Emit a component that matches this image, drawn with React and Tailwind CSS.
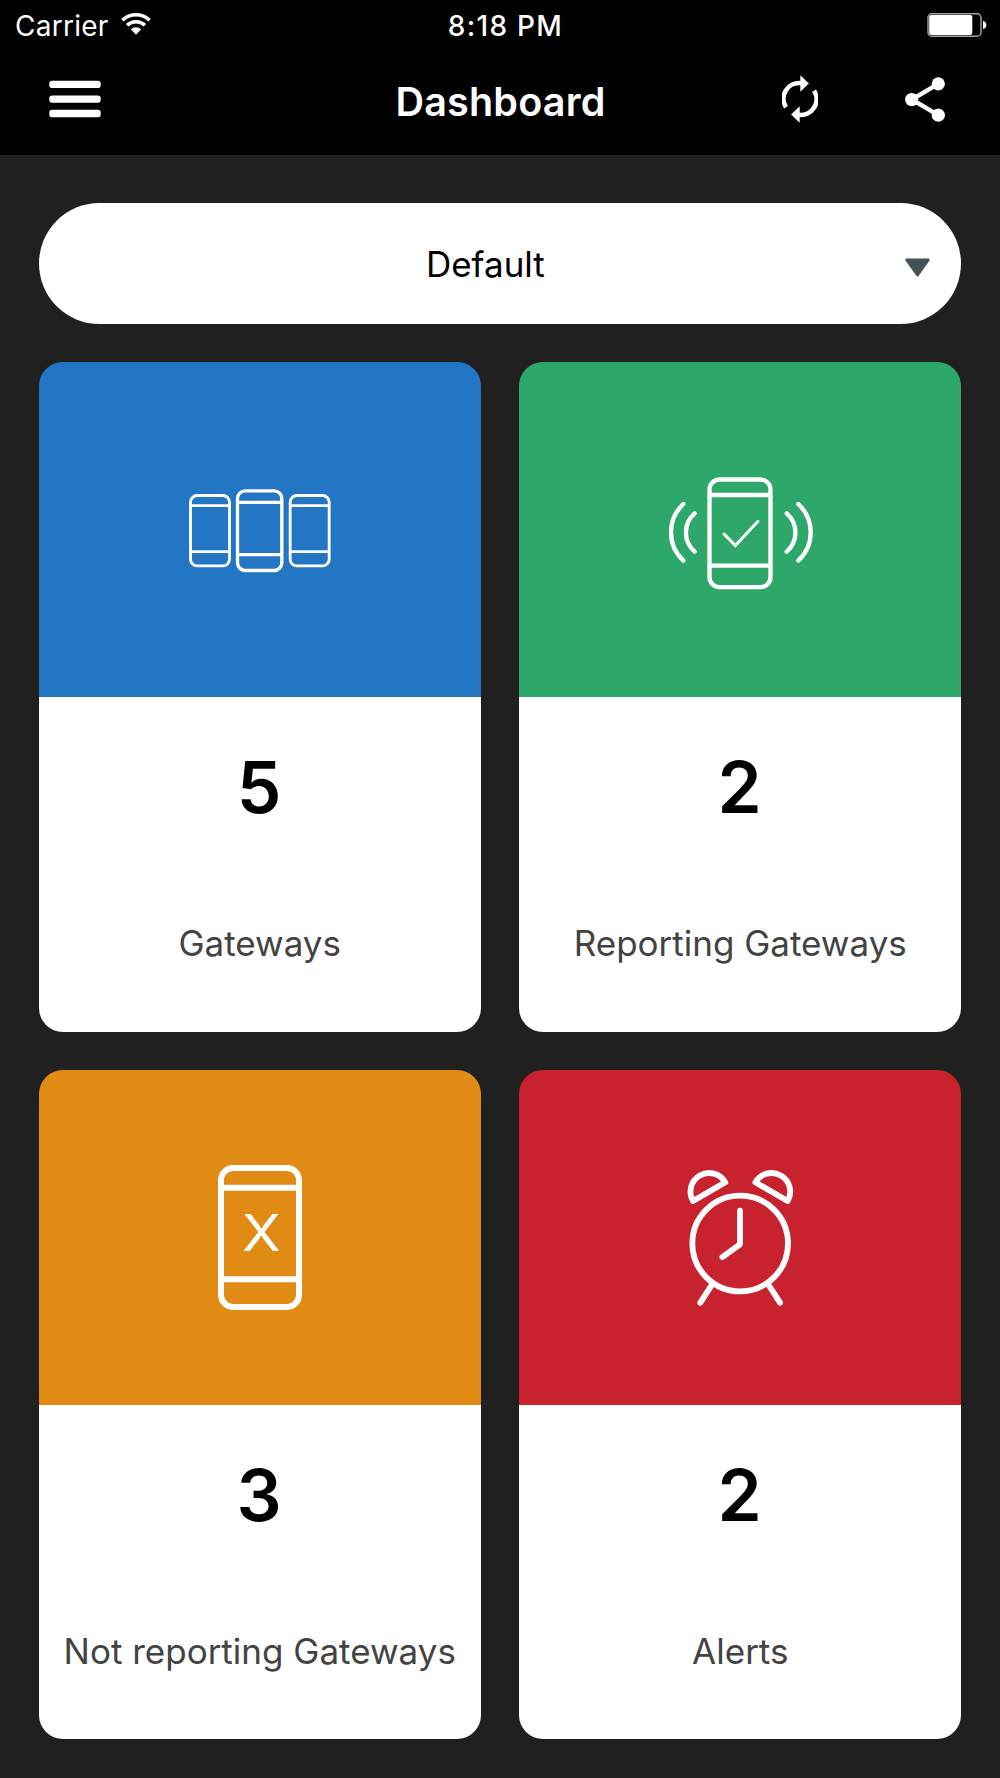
/**
 * Dashboard screen - gateway status overview
 *
 * Status bar, navigation bar, group selector and four summary tiles.
 */

import { useState } from 'react';

const stats = { gateways: 5, reporting: 2, notReporting: 3, alerts: 2 };

function WifiIcon() {
  return (
    <svg className="w-8 h-6" viewBox="0 0 32 24" fill="none" stroke="white" strokeWidth="3.5">
      <path d="M2.4 8.2a20 20 0 0 1 27.2 0" />
      <path d="M7.1 13.2a13 13 0 0 1 17.8 0" />
      <path d="M16 22.7l-5.1-5.4a7.4 7.4 0 0 1 10.2 0z" fill="white" stroke="none" />
    </svg>
  );
}

function BatteryIcon() {
  return (
    <svg className="w-[60px] h-6" viewBox="0 0 60 24">
      <rect x="1" y=".8" width="53" height="22.4" rx="3.8" fill="none" stroke="#a3a3a3" strokeWidth="1.4" />
      <rect x="2.2" y="2" width="43.1" height="20" rx="2" fill="white" />
      <path d="M56 8c2 .2 3.4 2 3.4 4s-1.4 3.8-3.4 4z" fill="white" />
    </svg>
  );
}

function MenuIcon() {
  return (
    <svg className="w-[52px] h-[38px]" viewBox="0 0 52 38" fill="white">
      <rect x=".3" y=".7" width="51.4" height="7.4" rx="2.8" />
      <rect x=".3" y="15.4" width="51.4" height="7.4" rx="2.8" />
      <rect x=".3" y="29.8" width="51.4" height="7.4" rx="2.8" />
    </svg>
  );
}

function RefreshIcon() {
  return (
    <svg className="w-9 h-12" viewBox="0 0 36 48" fill="white">
      <g fill="none" stroke="white" strokeWidth="4.6">
        <path d="M4 32.2a15.6 15.6 0 0 1 15-24" />
        <path d="M32 15.8a15.6 15.6 0 0 1-15 24" />
      </g>
      <path d="M18.3 .2l8.6 8.3-8.6 8.3z" />
      <path d="M17.7 47.8l-8.6-8.3 8.6-8.3z" />
    </svg>
  );
}

function ShareIcon() {
  return (
    <svg className="w-10 h-[45px]" viewBox="0 0 40 45" fill="white">
      <path d="M33.3 6.8L6.7 22.5l26.6 15.7" fill="none" stroke="white" strokeWidth="4.4" />
      <circle cx="33.3" cy="6.8" r="6.6" />
      <circle cx="6.7" cy="22.5" r="6.6" />
      <circle cx="33.3" cy="38.2" r="6.6" />
    </svg>
  );
}

function GatewaysIcon() {
  return (
    <svg className="w-[180px] h-[120px]" viewBox="0 0 540 360" fill="none" stroke="white" strokeWidth="8.5">
      <rect x="61.5" y="76.5" width="117" height="211" rx="20" />
      <path d="M62 107h116M62 245h116" />
      <rect x="202.5" y="62.5" width="133" height="239" rx="23" strokeWidth="10" />
      <path d="M203 97h132M203 254h132" strokeWidth="9.5" />
      <rect x="360.5" y="76.5" width="117" height="211" rx="20" />
      <path d="M361 107h116M361 245h116" />
    </svg>
  );
}

function ReportingIcon() {
  return (
    <svg className="w-[180px] h-[139.3px]" viewBox="0 0 540 418" fill="none" stroke="white" strokeWidth="13" strokeLinecap="round">
      <rect x="178.5" y="58.5" width="183" height="323" rx="30" />
      <path d="M180 105h180M180 317h180" />
      <path d="M222 222l34 35 68-73" strokeWidth="9" />
      <path d="M134 160a76 76 0 0 0 0 115" strokeWidth="13" />
      <path d="M100 132a116 116 0 0 0 0 170" strokeWidth="13" />
      <path d="M410 160a76 76 0 0 1 0 115" strokeWidth="13" />
      <path d="M445 132a116 116 0 0 1 0 170" strokeWidth="13" />
    </svg>
  );
}

function NotReportingIcon() {
  return (
    <svg className="w-[120px] h-[174.7px]" viewBox="0 0 360 524" fill="none" stroke="white" strokeWidth="18">
      <rect x="63" y="54" width="234" height="417" rx="36" />
      <path d="M64 113h232M64 388h232" />
      <text
        transform="translate(184 302) scale(1.12 1)"
        textAnchor="middle"
        className="font-['Inter',sans-serif] text-[152px]"
        fill="white"
        stroke="none"
      >
        X
      </text>
    </svg>
  );
}

function AlarmIcon() {
  return (
    <svg
      className="w-[140px] h-[174.7px]"
      viewBox="0 0 420 524"
      fill="none"
      stroke="white"
      strokeWidth="17.5"
      strokeLinecap="round"
      strokeLinejoin="round"
    >
      <circle cx="210.5" cy="280.5" r="143.5" />
      <path d="M210 182v101l-53 38" />
      <path d="M127 402l-36 56M294 402l36 56" />
      <path d="M69 153l97-56a56 56 0 0 0-97 56z" />
      <path d="M353 153l-97-56a56 56 0 0 1 97 56z" />
    </svg>
  );
}

function StatCard({ color, icon, value, label }) {
  return (
    <button className="flex flex-col rounded-[24px] overflow-hidden">
      <div className={`w-full h-[334.7px] shrink-0 flex items-center justify-center ${color}`}>{icon}</div>
      <div className="w-full flex-1 bg-white">
        <div className="h-[179px] pt-[1px] pr-[1.5px] flex items-center justify-center text-[71px] font-semibold text-black">
          {value}
        </div>
        <div className="h-[134.6px] flex items-center justify-center text-[35px] text-[#434343] whitespace-nowrap">
          {label}
        </div>
      </div>
    </button>
  );
}

export default function App() {
  const [group] = useState('Default');

  return (
    <div className="w-[1000px] h-[1778px] overflow-hidden bg-[#202020] font-['Inter',sans-serif]">
      <header className="h-[155px] bg-black text-white">
        {/* Status bar */}
        <div className="h-[50px] grid grid-cols-[1fr_auto_1fr] items-center pl-[15px] pr-[13px] text-[28px]">
          <div className="flex items-center">
            <span className="pt-[2px] tracking-[0.25px]">Carrier</span>
            <div className="ml-[11px] -mt-[2px]">
              <WifiIcon />
            </div>
          </div>
          <span className="pt-[2px] pl-[9px] font-medium tracking-[1.3px]">8:18 PM</span>
          <div className="justify-self-end">
            <BatteryIcon />
          </div>
        </div>

        {/* Navigation bar */}
        <div className="h-[98px] grid grid-cols-[1fr_auto_1fr] items-center pl-[49px] pr-[55px]">
          <button className="justify-self-start">
            <MenuIcon />
          </button>
          <h1 className="pt-[7px] pl-[7px] text-[39.5px] leading-none font-semibold tracking-[0.2px]">Dashboard</h1>
          <div className="justify-self-end flex items-center gap-[87px]">
            <button>
              <RefreshIcon />
            </button>
            <button>
              <ShareIcon />
            </button>
          </div>
        </div>
      </header>

      <main className="px-[38.7px] pt-[48px]">
        {/* Group selector */}
        <button className="w-full h-[120.7px] flex items-center pl-[26px] pr-[31.3px] rounded-full bg-white text-[35px] text-black">
          <span className="flex-1 pt-[1px] pl-[1px] text-center">{group}</span>
          <svg className="w-[25px] h-[19px] mt-[8px]" viewBox="0 0 25 19" fill="#455358">
            <path d="M1.7 .5h21.6c1.2 0 1.8 1.2 1.1 2.2L13.7 17.8c-.6.8-1.8.8-2.4 0L.6 2.7C-.1 1.7.5.5 1.7.5z" />
          </svg>
        </button>

        {/* Summary tiles */}
        <div className="mt-[38.7px] grid grid-cols-2 gap-x-[38.5px] gap-y-[38.4px] auto-rows-[669.3px]">
          <StatCard color="bg-[#2376c4]" icon={<GatewaysIcon />} value={stats.gateways} label="Gateways" />
          <StatCard color="bg-[#2ea86a]" icon={<ReportingIcon />} value={stats.reporting} label="Reporting Gateways" />
          <StatCard color="bg-[#e08b14]" icon={<NotReportingIcon />} value={stats.notReporting} label="Not reporting Gateways" />
          <StatCard color="bg-[#c9222f]" icon={<AlarmIcon />} value={stats.alerts} label="Alerts" />
        </div>
      </main>
    </div>
  );
}
